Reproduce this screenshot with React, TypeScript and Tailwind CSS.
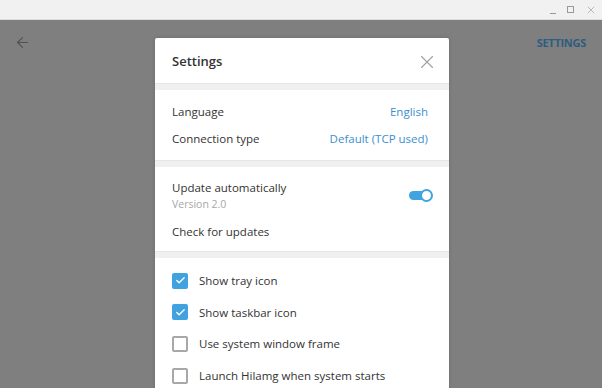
import { ArrowLeft, X, Check } from "lucide-react";

const font = { fontFamily: '"Open Sans", "Noto Sans", sans-serif' };

function Toggle() {
  return (
    <div className="relative w-[24px] h-[12px] flex items-center">
      <div className="w-[22px] h-[9px] rounded-full bg-[#3fa4df]" />
      <div className="absolute right-0 w-[13px] h-[13px] rounded-full bg-white border-2 border-[#3fa4df]" />
    </div>
  );
}

function CheckRow({ label, checked }: { label: string; checked: boolean }) {
  return (
    <div className="flex items-center gap-[11px] h-[31.6px]">
      {checked ? (
        <div className="w-[16px] h-[16px] rounded-[2px] bg-[#40a3e0] flex items-center justify-center">
          <Check className="w-[11px] h-[11px] text-white" strokeWidth={3} />
        </div>
      ) : (
        <div className="w-[16px] h-[16px] rounded-[2px] border-2 border-[#a8a8a8] bg-white" />
      )}
      <span className="text-[11.5px] text-[#333]">{label}</span>
    </div>
  );
}

function Gap() {
  return <div className="h-[7px] bg-[#f0f0f0] border-t border-[#e6e6e6]" />;
}

export default function App() {
  return (
    <div className="w-[602px] h-[388px] overflow-hidden flex flex-col bg-[#7f7f7f]" style={font}>
      <div className="h-[20px] shrink-0 bg-[#f1f1f1] border-b border-[#dcdcdc] flex items-center justify-end gap-[11px] pr-[5px] text-[#9a9a9a]">
        <div className="w-[6px] h-[1px] bg-[#999] mt-[8px]" />
        <div className="w-[7px] h-[7px] border border-[#999]" />
        <X className="w-[12px] h-[12px]" strokeWidth={1.3} />
      </div>
      <div className="relative flex-1 flex justify-center pt-[18px] pl-[2px]">
        <ArrowLeft className="absolute left-[14px] top-[14px] w-[17px] h-[17px] text-[#505050]" strokeWidth={1.5} />
        <span className="absolute right-[16px] top-[15px] text-[11px] font-bold text-[#2c5d80] tracking-tight">SETTINGS</span>
        <div className="w-[294px] bg-white rounded-t-[2px] flex flex-col shadow-[0_0_4px_rgba(0,0,0,0.15)]">
          <div className="h-[45px] flex items-center justify-between pl-[17px] pr-[11px] pt-[2px]">
            <span className="text-[13px] font-semibold text-[#333]">Settings</span>
            <X className="w-[22px] h-[22px] text-[#a0a0a0]" strokeWidth={1.2} />
          </div>
          <Gap />
          <div className="h-[70px] pl-[17px] pr-[21px] flex flex-col justify-center gap-[10px] text-[11.5px]">
            <div className="flex justify-between">
              <span className="text-[#333]">Language</span>
              <span className="text-[#3a8fcf]">English</span>
            </div>
            <div className="flex justify-between">
              <span className="text-[#333]">Connection type</span>
              <span className="text-[#3a8fcf]">Default (TCP used)</span>
            </div>
          </div>
          <Gap />
          <div className="h-[84px] pl-[17px] pr-[16px] pt-[2px] flex flex-col justify-center text-[11.5px]">
            <div className="flex items-center justify-between">
              <div className="flex flex-col">
                <span className="text-[#333] leading-[16px]">Update automatically</span>
                <span className="text-[#a8a8a8] text-[10.5px] leading-[16px]">Version 2.0</span>
              </div>
              <Toggle />
            </div>
            <span className="text-[#333] mt-[11px]">Check for updates</span>
          </div>
          <Gap />
          <div className="px-[17px] pt-[7px] flex flex-col">
            <CheckRow label="Show tray icon" checked />
            <CheckRow label="Show taskbar icon" checked />
            <CheckRow label="Use system window frame" checked={false} />
            <CheckRow label="Launch Hilamg when system starts" checked={false} />
          </div>
        </div>
      </div>
    </div>
  );
}
